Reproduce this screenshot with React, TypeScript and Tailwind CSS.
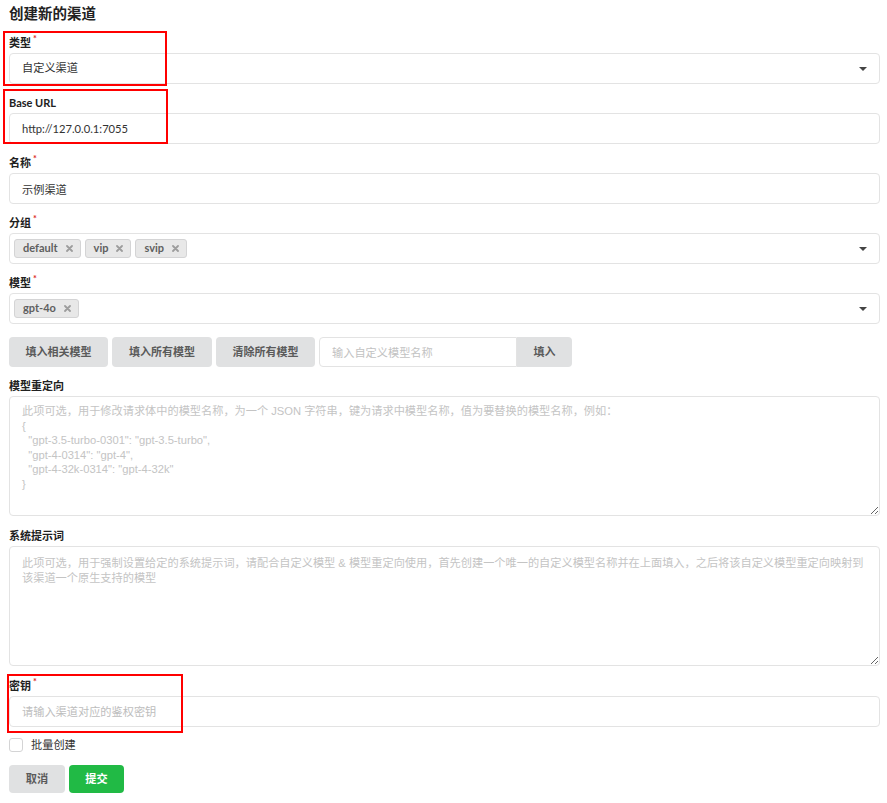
import React from 'react';

const font = { fontFamily: 'Lato, "Noto Sans CJK SC", sans-serif' };
const hintFont = { fontFamily: '"Liberation Sans", "Noto Sans CJK SC", sans-serif' };

function Label({ text, required }: { text: string; required?: boolean }) {
  return (
    <div className="flex h-[15px] items-center mb-[3px] text-[11px] font-bold text-[#212121] leading-[15px]">
      {text}
      {required && <span className="ml-[2px] -mt-[8px] text-[9px] text-[#db2828]">*</span>}
    </div>
  );
}

function Caret() {
  return (
    <span className="absolute right-[12px] top-1/2 -translate-y-1/2 w-0 h-0 border-l-[4px] border-r-[4px] border-t-[4px] border-l-transparent border-r-transparent border-t-[#444]" />
  );
}

function Tag({ text }: { text: string }) {
  return (
    <span className="inline-flex items-center h-[19px] pl-[8px] pr-[7px] gap-[8px] rounded-[3px] bg-[#e8e8e8] border border-[#d4d4d5] text-[11px] font-bold text-[#5f5f5f]">
      {text}
      <svg width="7" height="7" viewBox="0 0 7 7">
        <path d="M1 1L6 6M6 1L1 6" stroke="#9d9d9d" strokeWidth="1.8" strokeLinecap="round" />
      </svg>
    </span>
  );
}

function TextInput({ value, placeholder }: { value?: string; placeholder?: string }) {
  return (
    <input
      readOnly
      defaultValue={value}
      placeholder={placeholder}
      className="block w-full h-[31px] px-[12px] rounded-[4px] border border-[#e3e3e3] bg-white text-[11.2px] text-[#333] placeholder:text-[#bdbdbd] outline-none"
    />
  );
}

function Select({ children, text }: { children?: React.ReactNode; text?: string }) {
  return (
    <div className="relative flex items-center w-full h-[31px] px-[4px] gap-[4px] rounded-[4px] border border-[#e3e3e3] bg-white">
      {text ? <span className="pl-[8px] text-[11.2px] text-[#333]">{text}</span> : children}
      <Caret />
    </div>
  );
}

const redirectHint = `此项可选，用于修改请求体中的模型名称，为一个 JSON 字符串，键为请求中模型名称，值为要替换的模型名称，例如：
{
  "gpt-3.5-turbo-0301": "gpt-3.5-turbo",
  "gpt-4-0314": "gpt-4",
  "gpt-4-32k-0314": "gpt-4-32k"
}`;

const promptHint =
  '此项可选，用于强制设置给定的系统提示词，请配合自定义模型 & 模型重定向使用，首先创建一个唯一的自定义模型名称并在上面填入，之后将该自定义模型重定向映射到该渠道一个原生支持的模型';

export default function App() {
  return (
    <div className="relative w-[887px] h-[803px] bg-white pl-[9px] pr-[7px]" style={font}>
      <h1 className="pt-[4px] h-[24px] leading-[20px] text-[14.5px] font-bold text-[#222] mb-[11px]">创建新的渠道</h1>

      <div className="mb-[11px]">
        <Label text="类型" required />
        <Select text="自定义渠道" />
      </div>

      <div className="mb-[11px]">
        <Label text="Base URL" />
        <TextInput value="http://127.0.0.1:7055" />
      </div>

      <div className="mb-[11px]">
        <Label text="名称" required />
        <TextInput value="示例渠道" />
      </div>

      <div className="mb-[11px]">
        <Label text="分组" required />
        <Select>
          <Tag text="default" />
          <Tag text="vip" />
          <Tag text="svip" />
        </Select>
      </div>

      <div className="mb-[13px]">
        <Label text="模型" required />
        <Select>
          <Tag text="gpt-4o" />
        </Select>
      </div>

      <div className="flex h-[30px] gap-[4px] mb-[11px] text-[11px] font-bold text-[#5a5a5a]">
        <button className="w-[99px] rounded-[4px] bg-[#e0e1e2]">填入相关模型</button>
        <button className="w-[100px] rounded-[4px] bg-[#e0e1e2]">填入所有模型</button>
        <button className="w-[99px] rounded-[4px] bg-[#e0e1e2]">清除所有模型</button>
        <div className="flex">
          <input
            readOnly
            placeholder="输入自定义模型名称"
            className="w-[198px] h-[30px] px-[12px] rounded-l-[4px] border border-[#e3e3e3] text-[11.2px] font-normal placeholder:text-[#c2c2c2] outline-none"
          />
          <button className="w-[55px] rounded-r-[4px] bg-[#e0e1e2]">填入</button>
        </div>
      </div>

      <div className="mb-[12px]">
        <div className="mb-[1px]"><Label text="模型重定向" /></div>
        <textarea
          readOnly
          placeholder={redirectHint}
          className="block w-full h-[120px] px-[12px] pt-[7px] rounded-[4px] border border-[#e3e3e3] text-[11.2px] leading-[14.6px] placeholder:text-[#c4c4c4] outline-none"
          style={hintFont}
        />
      </div>

      <div className="mb-[12px]">
        <Label text="系统提示词" />
        <textarea
          readOnly
          placeholder={promptHint}
          className="block w-full h-[120px] px-[12px] pt-[9px] rounded-[4px] border border-[#e3e3e3] text-[11.2px] leading-[14.6px] placeholder:text-[#c4c4c4] outline-none"
          style={hintFont}
        />
      </div>

      <div className="mb-[11px]">
        <Label text="密钥" required />
        <TextInput placeholder="请输入渠道对应的鉴权密钥" />
      </div>

      <div className="flex items-center h-[14px] mb-[13px]">
        <span className="w-[14px] h-[14px] rounded-[3px] border border-[#d4d4d5] bg-white" />
        <span className="ml-[8px] text-[11.2px] text-[#333]">批量创建</span>
      </div>

      <div className="flex gap-[4px] h-[28px] text-[11.2px] font-bold">
        <button className="w-[56px] rounded-[4px] bg-[#e0e1e2] text-[#5a5a5a]">取消</button>
        <button className="w-[55px] rounded-[4px] bg-[#21ba45] text-white">提交</button>
      </div>

      <div className="absolute left-[3px] top-[31px] w-[164px] h-[55px] border-2 border-[#ff0000] pointer-events-none" />
      <div className="absolute left-[3px] top-[89px] w-[165px] h-[55px] border-2 border-[#ff0000] pointer-events-none" />
      <div className="absolute left-[7px] top-[674px] w-[176px] h-[59px] border-2 border-[#ff0000] pointer-events-none" />
    </div>
  );
}
